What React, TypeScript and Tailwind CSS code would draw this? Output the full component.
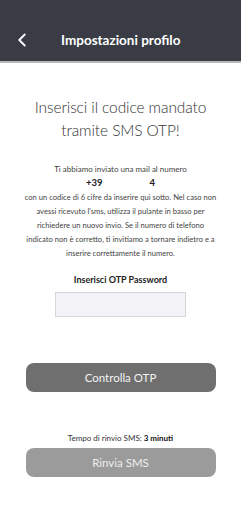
import { ChevronLeft } from "lucide-react";

export default function App() {
  return (
    <div className="min-h-[521px] w-full bg-white" style={{ fontFamily: 'Lato, "Noto Sans", sans-serif' }}>
      <header className="flex h-[63px] items-end border-b-2 border-[#b8b9bc] bg-[#393c44] pb-[10px]">
        <button className="ml-[11px] text-white">
          <ChevronLeft size={22} strokeWidth={2} />
        </button>
        <h1 className="ml-[28px] pb-[1px] text-[13.5px] font-bold text-white">Impostazioni profilo</h1>
      </header>

      <main className="flex flex-col items-center px-[24px]">
        <h2 className="mt-[33px] text-center text-[15.5px] leading-[23px] font-light tracking-[-0.1px] text-[#333]">
          Inserisci il codice mandato
          <br />
          tramite SMS OTP!
        </h2>

        <p className="mt-[21px] text-[8px] text-[#444]">Ti abbiamo inviato una mail al numero</p>
        <div className="mt-[1px] flex gap-[47px] text-[9.5px] font-bold text-[#222]">
          <span>+39</span>
          <span>4</span>
        </div>
        <p className="text-center text-[7.6px] leading-[14px] text-[#444]">
          con un codice di 6 cifre da inserire qui sotto. Nel caso non avessi ricevuto l'sms, utilizza il pulante in basso per richiedere un nuovo invio. Se il numero di telefono indicato non è corretto, ti invitiamo a tornare indietro e a inserire correttamente il numero.
        </p>

        <label className="mt-[13px] text-[9px] font-bold text-[#222]">Inserisci OTP Password</label>
        <input className="mt-[5px] h-[25px] w-[131px] border border-[#d6d6d8] bg-[#f3f2f7] outline-none" />

        <button className="mt-[46px] h-[29px] w-[190px] rounded-[8px] bg-[#6f6f6f] text-[11.5px] text-[#f2f2f2]">
          Controlla OTP
        </button>

        <p className="mt-[40px] text-[8px] text-[#333]">
          Tempo di rinvio SMS: <span className="font-bold text-[#111]">3 minuti</span>
        </p>
        <button className="mt-[4px] h-[29px] w-[190px] rounded-[8px] bg-[#9b9b9b] text-[11.5px] text-[#eee]">
          Rinvia SMS
        </button>
      </main>
    </div>
  );
}
